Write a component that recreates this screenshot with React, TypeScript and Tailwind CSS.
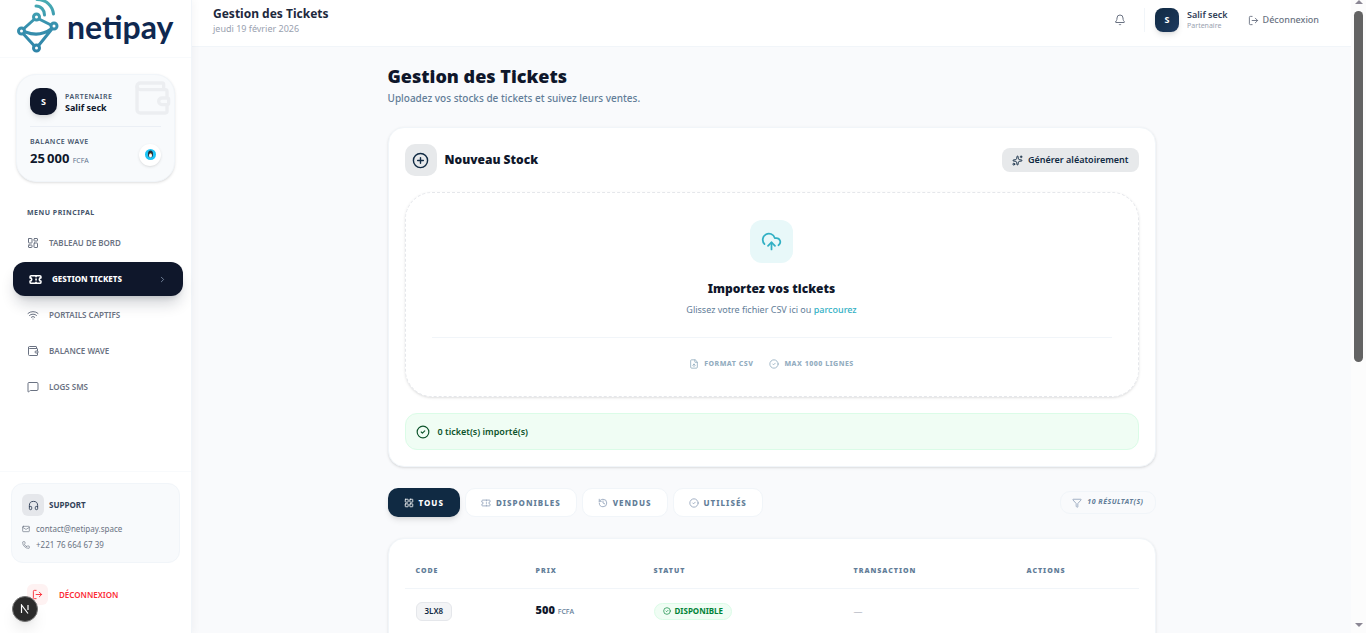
import type { ComponentType, ReactNode } from 'react';
import {
  Bell,
  ChevronRight,
  CircleCheck,
  CirclePlus,
  CloudUpload,
  FileUp,
  Funnel,
  Headphones,
  History,
  LayoutDashboard,
  LayoutGrid,
  LogOut,
  Mail,
  MessageSquare,
  Phone,
  Sparkles,
  Ticket,
  Wallet,
  Wifi,
} from 'lucide-react';

type Icon = ComponentType<{ size?: number; className?: string; strokeWidth?: number }>;

const menu: { label: string; icon: Icon; active?: boolean }[] = [
  { label: 'Tableau de bord', icon: LayoutDashboard },
  { label: 'Gestion Tickets', icon: Ticket, active: true },
  { label: 'Portails Captifs', icon: Wifi },
  { label: 'Balance Wave', icon: Wallet },
  { label: 'Logs SMS', icon: MessageSquare },
];

const filters: { label: string; icon: Icon; active?: boolean }[] = [
  { label: 'Tous', icon: LayoutGrid, active: true },
  { label: 'Disponibles', icon: Ticket },
  { label: 'Vendus', icon: History },
  { label: 'Utilisés', icon: CircleCheck },
];

const tickets = [{ code: '3LX8', price: 500, status: 'Disponible', transaction: '—' }];

function Logo() {
  return (
    <div className="flex h-[58px] items-center gap-2 border-b border-slate-50 px-4">
      <svg width="43" height="58" viewBox="0 0 43 58" fill="none" aria-hidden="true">
        <defs>
          <linearGradient id="logo" x1="0" y1="0" x2="0" y2="52" gradientUnits="userSpaceOnUse">
            <stop stopColor="#48adb3" />
            <stop offset="0.5" stopColor="#3790ae" />
            <stop offset="1" stopColor="#2f84a8" />
          </linearGradient>
        </defs>
        <g stroke="url(#logo)" strokeWidth="3" strokeLinecap="round" strokeLinejoin="round">
          <path d="M18 19.500 8 28.500M23 19l11 5.500M7.500 34l10 11M35.500 29.500 23 45M9.500 32c9 3.500 18 2.500 25.500-3" />
          <circle cx="20.500" cy="17" r="3" />
          <circle cx="38" cy="26" r="3" />
          <circle cx="20.500" cy="48" r="3" />
          <circle cx="5.500" cy="31" r="3" />
          <path d="M20 6c5 0 8.500 4 8.500 9M21-.5c9 0 15.500 6 16.500 14.500" />
        </g>
      </svg>
      <span className="pb-1 font-['Lato',sans-serif] text-[32px] leading-8 font-bold text-[#0f2850]">netipay</span>
    </div>
  );
}

function Sidebar() {
  return (
    <aside className="relative z-10 flex w-48 shrink-0 flex-col border-r border-slate-100 bg-white shadow-[2px_0_8px_rgba(15,23,42,0.04)]">
      <Logo />

      {/* Partner balance */}
      <section className="relative mx-4 mt-4 rounded-[20px] border border-slate-100 bg-slate-50 px-[13px] pt-[13px] pb-3 shadow-sm">
        <Wallet size={40} strokeWidth={2} className="absolute top-[3px] right-[2px] text-[#eceef1]" />
        <div className="flex items-center gap-2">
          <div className="flex size-[27px] items-center justify-center rounded-[10px] bg-slate-900 text-[9px] font-bold text-white shadow-md">S</div>
          <div>
            <p className="text-[7px] leading-[11px] font-semibold tracking-[0.5px] text-slate-600 uppercase">Partenaire</p>
            <p className="text-[9px] leading-[11px] font-bold text-slate-900">Salif seck</p>
          </div>
        </div>
        <div className="mt-[11px] flex items-center justify-between border-t border-slate-200/60 pt-[9px]">
          <div>
            <p className="text-[7px] leading-3 font-semibold tracking-[0.5px] text-slate-600 uppercase">Balance Wave</p>
            <p className="mt-[2px] text-[13px] leading-4 font-bold text-slate-900">
              25&#8239;000 <span className="text-[7px] font-normal text-slate-500">FCFA</span>
            </p>
          </div>
          <div className="mt-1 flex size-[22px] items-center justify-center rounded-full bg-white shadow">
            <svg width="11" height="11" viewBox="0 0 22 22" aria-hidden="true">
              <circle cx="11" cy="11" r="11" fill="#1dc4f5" />
              <ellipse cx="11" cy="10" rx="5" ry="7" fill="#26303a" />
              <ellipse cx="11" cy="13" rx="3" ry="4" fill="#fff" />
              <path d="M9 8h4l-2 3z" fill="#f3a73b" />
            </svg>
          </div>
        </div>
      </section>

      <p className="mt-[25px] px-[27px] text-[7px] leading-3 font-bold tracking-[0.5px] text-slate-600 uppercase">Menu principal</p>
      <nav className="mt-[7px] flex flex-col gap-[2px] pr-2 pl-[13px]">
        {menu.map(({ label, icon: ItemIcon, active }) =>
          active ? (
            <a key={label} href="#" className="flex h-[34px] items-center gap-[10px] rounded-xl bg-slate-900 px-4 text-[8px] font-extrabold text-white uppercase shadow-lg shadow-slate-900/20">
              <ItemIcon size={13} strokeWidth={3} />
              {label}
              <ChevronRight size={9} className="ml-auto text-slate-400" />
            </a>
          ) : (
            <a key={label} href="#" className="flex h-[34px] items-center gap-[10px] px-[14px] text-[8px] font-semibold text-gray-500 uppercase">
              <ItemIcon size={12} />
              {label}
            </a>
          ),
        )}
      </nav>

      <div className="mt-auto border-t border-slate-50 px-[11px] pt-[11px] pb-7">
        <section className="rounded-xl border border-slate-100 bg-slate-50 px-[10px] pt-[10px] pb-[9px] text-[8px] text-gray-500">
          <h2 className="mb-[5px] flex items-center gap-[5px] font-bold text-slate-700 uppercase">
            <span className="flex size-[22px] items-center justify-center rounded-md bg-gray-200">
              <Headphones size={11} />
            </span>
            Support
          </h2>
          <a href="#" className="flex h-4 items-center gap-[6px]">
            <Mail size={8} />
            contact@netipay.space
          </a>
          <a href="#" className="flex h-4 items-center gap-[6px]">
            <Phone size={8} />
            +221 76 664 67 39
          </a>
        </section>
        <button type="button" className="mt-[21px] ml-4 flex items-center gap-[11px] text-[8px] font-semibold text-red-500 uppercase">
          <span className="flex size-[21px] items-center justify-center rounded-md bg-red-50">
            <LogOut size={11} />
          </span>
          Déconnexion
        </button>
      </div>
    </aside>
  );
}

function Topbar() {
  return (
    <header className="flex h-[47px] shrink-0 items-center justify-between border-b border-slate-100 bg-white pr-8 pl-[21px]">
      <div className="pb-1">
        <p className="text-xs leading-4 font-bold text-slate-800">Gestion des Tickets</p>
        <p className="text-[9px] leading-[14px] text-gray-400">jeudi 19 février 2026</p>
      </div>
      <div className="flex items-center pb-[6px] text-gray-500">
        <button type="button" aria-label="Notifications">
          <Bell size={12} />
        </button>
        <div className="ml-[18px] flex h-6 items-center gap-2 border-l border-slate-100 pl-[10px]">
          <div className="flex size-6 items-center justify-center rounded-lg bg-gradient-to-br from-[#102a43] to-[#1e3a5f] text-[9px] font-bold text-white shadow-md">S</div>
          <div>
            <p className="text-[9px] leading-3 font-semibold text-slate-700">Salif seck</p>
            <p className="text-[7px] leading-[10px] text-gray-400">Partenaire</p>
          </div>
        </div>
        <button type="button" className="ml-5 flex items-center gap-1 text-[9px] font-medium">
          <LogOut size={11} />
          Déconnexion
        </button>
      </div>
    </header>
  );
}

function Card({ children }: { children: ReactNode }) {
  return <section className="rounded-2xl border border-slate-100 bg-white p-4 shadow-sm">{children}</section>;
}

function NewStock() {
  return (
    <Card>
      <div className="flex items-center justify-between">
        <h2 className="flex items-center gap-2 text-xs leading-5 font-black text-slate-900">
          <span className="flex size-8 items-center justify-center rounded-[10px] bg-[#e7e9eb] text-[#102a43]">
            <CirclePlus size={17} />
          </span>
          Nouveau Stock
        </h2>
        <button type="button" className="flex h-6 items-center gap-[5px] rounded-lg bg-[#e7e9eb] px-[10px] text-[9px] font-semibold text-[#102a43]">
          <Sparkles size={11} />
          Générer aléatoirement
        </button>
      </div>

      {/* Drop zone */}
      <div className="mt-4 flex flex-col items-center rounded-[27px] border border-dashed border-gray-200 px-[26px] pt-[27px] pb-[26px] shadow-sm">
        <span className="flex size-[43px] items-center justify-center rounded-xl bg-[#e8f8f9] text-[#31b0c4]">
          <CloudUpload size={21} />
        </span>
        <h3 className="mt-4 text-xs leading-5 font-black text-slate-900">Importez vos tickets</h3>
        <p className="mt-[3px] text-[9px] leading-4 text-[#627d98]">
          Glissez votre fichier CSV ici ou <a href="#" className="font-medium text-[#31b0c4]">parcourez</a>
        </p>
        <div className="mt-[19px] flex w-full justify-center gap-4 border-t border-slate-100 pt-5 text-[7px] leading-3 font-extrabold tracking-[0.5px] text-[#93adbf] uppercase">
          <span className="flex items-center gap-[5px]">
            <FileUp size={10} />
            Format CSV
          </span>
          <span className="flex items-center gap-[5px]">
            <CircleCheck size={10} />
            Max 1000 lignes
          </span>
        </div>
      </div>

      <div role="status" className="mt-4 flex h-[37px] items-center gap-2 rounded-xl border border-green-100 bg-[#f0fdf4] px-[10px] text-[9px] font-semibold text-green-900">
        <CircleCheck size={14} />
        0 ticket(s) importé(s)
      </div>
    </Card>
  );
}

function Filters() {
  return (
    <div className="flex items-center justify-between">
      <div className="flex gap-[5px]">
        {filters.map(({ label, icon: FilterIcon, active }) => (
          <button
            key={label}
            type="button"
            className={
              active
                ? 'flex h-[29px] items-center gap-[5px] rounded-[10px] bg-[#102a43] px-4 text-[8px] font-extrabold tracking-[1px] text-white uppercase shadow-md'
                : 'flex h-[29px] items-center gap-[5px] rounded-[10px] border border-slate-100 bg-white px-[15px] text-[8px] font-extrabold tracking-[1px] text-[#627d98] uppercase'
            }
          >
            <FilterIcon size={10} className={active ? 'text-white' : 'text-slate-400'} />
            {label}
          </button>
        ))}
      </div>
      <span className="flex h-[23px] items-center gap-[5px] rounded-[10px] border border-slate-100 px-[11px] text-[7px] font-bold tracking-[0.5px] text-[#627d98] uppercase italic">
        <Funnel size={10} className="text-slate-400" />
        10 résultat(s)
      </span>
    </div>
  );
}

function TicketTable() {
  return (
    <Card>
      <table className="w-full table-fixed text-left">
        <colgroup>
          <col className="w-[120px]" />
          <col className="w-[118px]" />
          <col className="w-[200px]" />
          <col className="w-[173px]" />
          <col />
        </colgroup>
        <thead>
          <tr className="h-[33px] border-b border-slate-100 text-[7px] tracking-[1px] text-[#627d98] uppercase">
            {['Code', 'Prix', 'Statut', 'Transaction', 'Actions'].map((title) => (
              <th key={title} className="px-[11px] font-black">{title}</th>
            ))}
          </tr>
        </thead>
        <tbody>
          {tickets.map((ticket) => (
            <tr key={ticket.code} className="h-[46px]">
              <td className="px-[11px]">
                <div className="flex h-[19px] w-fit items-center rounded-md border border-gray-200 bg-gray-100 px-2 text-[8px] font-semibold text-[#102a43]">{ticket.code}</div>
              </td>
              <td className="px-[11px] text-[11px] leading-4 font-black text-slate-900">
                {ticket.price} <span className="text-[7px] font-medium text-[#627d98]">FCFA</span>
              </td>
              <td className="px-[11px]">
                <div className="flex h-[17px] w-fit items-center gap-1 rounded-full border border-green-100 bg-[#f0fdf4] px-2 text-[8px] font-bold text-green-700 uppercase">
                  <CircleCheck size={8} />
                  {ticket.status}
                </div>
              </td>
              <td className="px-[11px] text-[9px] text-gray-400">{ticket.transaction}</td>
              <td />
            </tr>
          ))}
        </tbody>
      </table>
    </Card>
  );
}

function Scrollbar() {
  return (
    <div className="flex w-[15px] shrink-0 flex-col items-center bg-[#fcfcfc]" aria-hidden="true">
      <span className="h-1 border-x-4 border-b-4 border-x-transparent border-b-[#8b8794]" />
      <span className="mt-[7px] h-[351px] w-[9px] rounded-full bg-[#636363]" />
      <span className="mt-auto mb-[6px] border-x-4 border-t-4 border-x-transparent border-t-[#8b8794]" />
    </div>
  );
}

function App() {
  return (
    <div className="flex h-screen overflow-hidden bg-[#f9fafc] font-['Noto_Sans',sans-serif]">
      <Sidebar />
      <div className="flex min-w-0 flex-1 flex-col">
        <Topbar />
        <main className="flex-1 overflow-hidden px-4 pt-[15px]">
          <div className="mx-auto max-w-3xl">
            <h1 className="text-lg leading-7 font-black text-slate-900">Gestion des Tickets</h1>
            <p className="text-[10px] leading-4 font-medium text-[#627d98]">Uploadez vos stocks de tickets et suivez leurs ventes.</p>
            <div className="mt-[21px] flex flex-col gap-[21px]">
              <NewStock />
              <Filters />
              <TicketTable />
            </div>
          </div>
        </main>
      </div>
      <Scrollbar />

      {/* Dev tools badge */}
      <button type="button" aria-label="Dev tools" className="fixed bottom-[11px] left-3 z-20 flex size-[26px] items-center justify-center rounded-full border border-neutral-500 bg-[#2b2b2b] shadow-lg">
        <svg width="10" height="10" viewBox="0 0 10 10" fill="none" stroke="#fff" strokeWidth="1.2" aria-hidden="true">
          <path d="M1.500 9V1l6.500 8.500M8 1v5" />
        </svg>
      </button>
    </div>
  );
}

export default App;
